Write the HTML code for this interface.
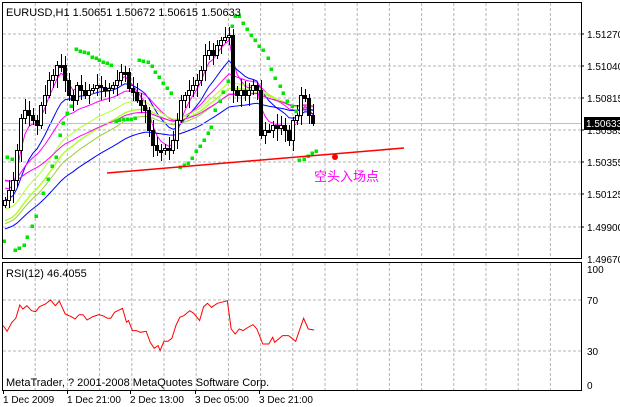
<!DOCTYPE html>
<html><head><meta charset="utf-8"><style>
html,body{margin:0;padding:0;background:#fff;width:620px;height:407px;overflow:hidden}
svg{display:block;font-family:"Liberation Sans","Noto Sans CJK SC",sans-serif}
</style></head><body>
<svg id="s" width="620" height="407" xmlns="http://www.w3.org/2000/svg">
<rect width="620" height="407" fill="#fff"/>
<g id="grid" stroke="#b4b4b4" stroke-dasharray="3,2" stroke-width="1"></g>
<g id="ma" fill="none" stroke-width="1"></g>
<line x1="2" y1="123.5" x2="581" y2="123.5" stroke="#c0c0c0"/>
<g id="c" shape-rendering="crispEdges"></g>
<g id="sar" fill="#00e600"></g>
<polyline points="107,173 404,148" stroke="#ff0000" stroke-width="1.5" fill="none"/>
<circle cx="335" cy="157" r="3" fill="#ff0000"/>
<text x="314" y="181" font-size="13" fill="#ff00ff">空头入场点</text>
<polyline id="rsi" fill="none" stroke="#ff0000" stroke-width="1"/>
<g shape-rendering="crispEdges" fill="none" stroke="#000">
<rect x="2.5" y="2.5" width="579" height="256"/>
<rect x="2.5" y="262.5" width="579" height="128"/>
</g>
<g font-size="11" fill="#000">
<text x="6" y="16">EURUSD,H1  1.50651 1.50672 1.50615 1.50633</text>
<text x="6" y="277">RSI(12) 46.4055</text>
<text x="6" y="386">MetaTrader, ? 2001-2008 MetaQuotes Software Corp.</text>
</g>
<g id="ax" font-size="10" fill="#000"></g>
<rect x="584" y="117" width="36" height="13" fill="#000"/>
<text x="586" y="127" font-size="10" fill="#fff">1.50633</text>
</svg>
<script>
const NS="http://www.w3.org/2000/svg";
function el(p,t,a,txt){const e=document.createElementNS(NS,t);for(const k in a)e.setAttribute(k,a[k]);if(txt)e.textContent=txt;document.getElementById(p).appendChild(e);return e;}
for(let i=1;i<18;i++){const x=3+i*32.2;if(x>580)break;el('grid','line',{x1:x,y1:3,x2:x,y2:258});el('grid','line',{x1:x,y1:263,x2:x,y2:390});}
const py=[34,66,98,130,162,194,227];
py.forEach(y=>el('grid','line',{x1:3,y1:y,x2:581,y2:y}));
[300,351].forEach(y=>el('grid','line',{x1:3,y1:y,x2:581,y2:y}));
const pl=["1.51270","1.51040","1.50815","1.50585","1.50355","1.50125","1.49900"];
py.forEach((y,i)=>{el('ax','line',{x1:581,y1:y,x2:584,y2:y,stroke:'#000'});el('ax','text',{x:587,y:y+4},pl[i]);});
el('ax','text',{x:587,y:263},"1.49670");
[[100,269],[70,300],[30,351],[0,385]].forEach(a=>el('ax','text',{x:587,y:a[1]+4},String(a[0])));
[["1 Dec 2009",3],["1 Dec 21:00",67],["2 Dec 13:00",130],["3 Dec 05:00",195],["3 Dec 21:00",259]].forEach(a=>{el('ax','text',{x:a[1],y:403},a[0]);el('ax','line',{x1:a[1]+.5,y1:391,x2:a[1]+.5,y2:394,stroke:'#000'});});
const C=[200,190,180,150,118,110,115,120,125,105,95,80,75,65,65,80,95,100,85,90,95,90,88,85,87,90,88,85,80,72,72,88,92,100,105,110,130,145,150,150,148,150,140,120,100,95,90,85,80,70,55,50,55,45,40,37,35,90,95,90,95,90,85,90,135,130,130,125,128,125,130,140,120,115,95,98,115,123];
let prev=205;
C.forEach((c,i)=>{const x=5+i*4;const o=prev;const hi=Math.min(o,c)-3-((i*7)%9);const lo=Math.max(o,c)+3+((i*5)%11);
el('c','line',{x1:x+.5,y1:hi,x2:x+.5,y2:lo,stroke:'#000'});
const t=Math.min(o,c),h=Math.max(2,Math.abs(o-c));
el('c','rect',{x:x-1.5,y:t+.5,width:3,height:h,fill:c<o?'#fff':'#000',stroke:'#000'});
prev=c;});
function ema(n,col,w,s){let v=s||215,pts=[];const k=2/(n+1);C.forEach((c,i)=>{v=v+(c-v)*k;pts.push((5+i*4)+","+v.toFixed(1));});el('ma','polyline',{points:pts.join(" "),stroke:col,'stroke-width':w||1});}
ema(4,'#ff00ff',1,180);ema(12,'#0000ff',1,200);ema(20,'#ff00ff',1,178);ema(28,'#adff2f',1,210);ema(34,'#adff2f',1.5,222);ema(40,'#9acd32',1,225);ema(45,'#ff00ff',1,180);ema(55,'#0000ff',1,230);
const S=[[4,241],[7,157],[12,159],[15,250],[19,248],[24,245],[27,237],[32,226],[36,216],[43,193],[48,179],[52,166],[56,157],[60,135],[63,123],[67,113],[71,106],[76,49],[80,51],[84,52],[88,53],[92,57],[96,58],[99,60],[103,62],[107,63],[111,65],[116,121],[119,120],[123,119],[127,119],[131,119],[135,118],[139,60],[143,61],[148,62],[152,66],[155,72],[159,77],[163,83],[167,88],[171,93],[180,167],[184,165],[188,163],[192,158],[196,151],[200,146],[204,140],[208,133],[211,127],[215,110],[220,101],[223,92],[228,81],[232,26],[235,16],[239,16],[243,23],[247,29],[251,35],[255,40],[259,46],[263,50],[268,58],[271,69],[275,78],[280,86],[283,93],[287,101],[292,106],[296,111],[299,160],[304,159],[308,156],[312,153],[316,151]];
S.forEach(p=>el('sar','rect',{x:p[0]-1.5,y:p[1]-1.5,width:3.5,height:3.5}));
const R=[[8,215],[18,232],[30,205],[40,193],[50,153],[58,165],[68,155],[80,170],[90,173],[100,158],[115,150],[128,138],[140,155],[150,141],[165,180],[180,188],[190,195],[200,182],[210,182],[220,198],[235,188],[250,182],[260,185],[272,193],[280,193],[290,175],[310,163],[320,205],[325,200],[335,230],[345,230],[355,235],[370,232],[380,265],[390,283],[400,275],[405,290],[415,262],[425,262],[435,253],[445,215],[455,190],[465,185],[480,170],[490,178],[505,200],[515,158],[525,148],[535,160],[550,148],[570,142],[575,140],[585,225],[595,240],[605,225],[615,230],[625,222],[640,212],[650,225],[665,270],[680,270],[690,250],[695,265],[715,245],[730,245],[748,262],[768,193],[780,225],[795,228]];
document.getElementById('rsi').setAttribute('points',R.map(p=>(p[0]/2.53).toFixed(1)+","+(300+(p[1]-138)*0.333).toFixed(1)).join(" "));
</script>
</body></html>
